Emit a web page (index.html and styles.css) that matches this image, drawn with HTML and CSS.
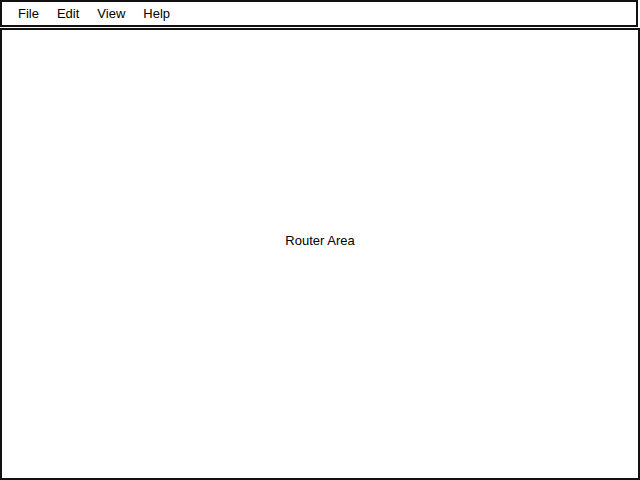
FILE: index.html
```html
<!DOCTYPE html>
<html>
<head>
<meta charset="utf-8">
<link rel="stylesheet" href="styles.css">
</head>
<body>
<div class="app">
  <nav class="menubar">
    <span class="menu-item">File</span>
    <span class="menu-item">Edit</span>
    <span class="menu-item">View</span>
    <span class="menu-item">Help</span>
  </nav>
  <main class="router-area">
    <span class="router-label">Router Area</span>
  </main>
</div>
</body>
</html>
```
FILE: styles.css
```css
html, body {
  margin: 0;
  padding: 0;
  background: #fff;
}
body {
  font-family: "Liberation Sans", Arial, sans-serif;
  font-size: 13px;
  color: #000;
}
.app {
  width: 640px;
  height: 480px;
  display: flex;
  flex-direction: column;
  box-sizing: border-box;
}
.menubar {
  height: 27px;
  box-sizing: border-box;
  margin-right: 2px;
  border: 2px solid #111;
  display: flex;
  align-items: center;
  padding-left: 16px;
  padding-bottom: 1px;
  gap: 18px;
}
.menu-item {
  line-height: 1;
}
.router-area {
  flex: 1;
  box-sizing: border-box;
  border: 2px solid #111;
  margin-top: 1px;
  display: flex;
  align-items: center;
  justify-content: center;
}
.router-label {
  position: relative;
  top: -14px;
}
```
